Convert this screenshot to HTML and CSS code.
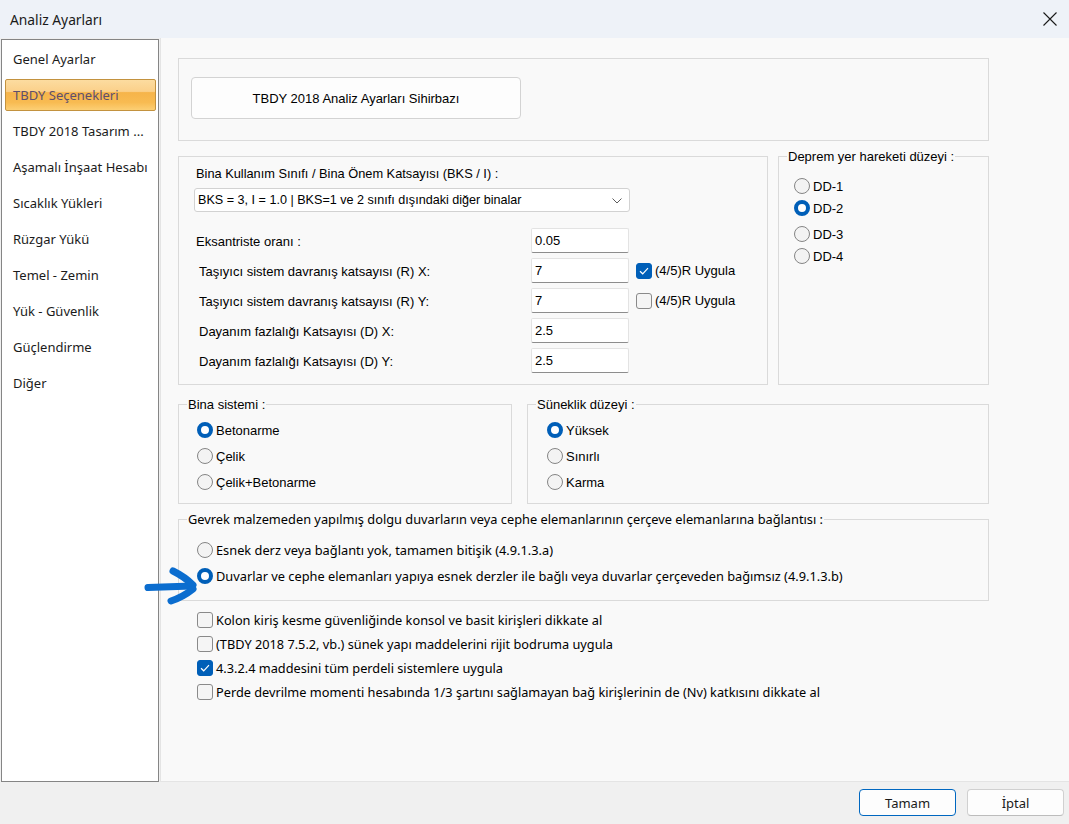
FILE: index.html
```html
<!DOCTYPE html>
<html lang="tr">
<head>
<meta charset="utf-8">
<title>Analiz Ayarları</title>
<link rel="stylesheet" href="styles.css">
</head>
<body>
<div class="window">
  <div class="titlebar">
    <span class="title">Analiz Ayarları</span>
    <button class="close" aria-label="Kapat">
      <svg width="14" height="14" viewBox="0 0 14 14"><path d="M0.5 0.5 L13.5 13.5 M13.5 0.5 L0.5 13.5" stroke="#1a1a1a" stroke-width="1.1" fill="none"/></svg>
    </button>
  </div>
  <div class="main">
    <ul class="nav">
      <li><span>Genel Ayarlar</span></li>
      <li class="sel"><span>TBDY Seçenekleri</span></li>
      <li><span>TBDY 2018 Tasarım ...</span></li>
      <li><span>Aşamalı İnşaat Hesabı</span></li>
      <li><span>Sıcaklık Yükleri</span></li>
      <li><span>Rüzgar Yükü</span></li>
      <li><span>Temel - Zemin</span></li>
      <li><span>Yük - Güvenlik</span></li>
      <li><span>Güçlendirme</span></li>
      <li><span>Diğer</span></li>
    </ul>
    <div class="content">
      <div class="box wizard-box">
        <button class="wizard">TBDY 2018 Analiz Ayarları Sihirbazı</button>
      </div>
      <div class="row1">
        <div class="box params">
          <div class="plabel">Bina Kullanım Sınıfı / Bina Önem Katsayısı (BKS / I) :</div>
          <div class="select">
            <span>BKS = 3, I = 1.0 | BKS=1 ve 2 sınıfı dışındaki diğer binalar</span>
            <svg width="10" height="6" viewBox="0 0 10 6"><path d="M0.5 0.5 L5 5 L9.5 0.5" stroke="#5c5c5c" stroke-width="1" fill="none"/></svg>
          </div>
          <div class="grid">
            <span class="glabel first">Eksantriste oranı :</span>
            <span class="input">0.05</span>
            <span></span>
            <span class="glabel">Taşıyıcı sistem davranış katsayısı (R) X:</span>
            <span class="input">7</span>
            <span class="check-inline"><span class="cb on"><svg width="10" height="8" viewBox="0 0 10 8"><path d="M1 4.2 L3.7 6.8 L9 1.2" stroke="#fff" stroke-width="1.2" fill="none"/></svg></span>(4/5)R Uygula</span>
            <span class="glabel">Taşıyıcı sistem davranış katsayısı (R) Y:</span>
            <span class="input">7</span>
            <span class="check-inline"><span class="cb"></span>(4/5)R Uygula</span>
            <span class="glabel">Dayanım fazlalığı Katsayısı (D) X:</span>
            <span class="input">2.5</span>
            <span></span>
            <span class="glabel">Dayanım fazlalığı Katsayısı (D) Y:</span>
            <span class="input">2.5</span>
            <span></span>
          </div>
        </div>
        <fieldset class="grp dd">
          <legend>Deprem yer hareketi düzeyi :</legend>
          <div class="opt"><span class="rb"></span>DD-1</div>
          <div class="opt"><span class="rb on"></span>DD-2</div>
          <div class="opt gap"><span class="rb"></span>DD-3</div>
          <div class="opt"><span class="rb"></span>DD-4</div>
        </fieldset>
      </div>
      <div class="row2">
        <fieldset class="grp sys">
          <legend>Bina sistemi :</legend>
          <div class="opt"><span class="rb on"></span>Betonarme</div>
          <div class="opt"><span class="rb"></span>Çelik</div>
          <div class="opt"><span class="rb"></span>Çelik+Betonarme</div>
        </fieldset>
        <fieldset class="grp sun">
          <legend>Süneklik düzeyi :</legend>
          <div class="opt"><span class="rb on"></span>Yüksek</div>
          <div class="opt"><span class="rb"></span>Sınırlı</div>
          <div class="opt"><span class="rb"></span>Karma</div>
        </fieldset>
      </div>
      <fieldset class="grp gev seg">
        <legend>Gevrek malzemeden yapılmış dolgu duvarların veya cephe elemanlarının çerçeve elemanlarına bağlantısı :</legend>
        <div class="opt"><span class="rb"></span>Esnek derz veya bağlantı yok, tamamen bitişik (4.9.1.3.a)</div>
        <div class="opt"><span class="rb on"></span>Duvarlar ve cephe elemanları yapıya esnek derzler ile bağlı veya duvarlar çerçeveden bağımsız (4.9.1.3.b)</div>
      </fieldset>
      <div class="checks seg">
        <div class="chk"><span class="cb"></span>Kolon kiriş kesme güvenliğinde konsol ve basit kirişleri dikkate al</div>
        <div class="chk"><span class="cb"></span>(TBDY 2018 7.5.2, vb.) sünek yapı maddelerini rijit bodruma uygula</div>
        <div class="chk"><span class="cb on"><svg width="10" height="8" viewBox="0 0 10 8"><path d="M1 4.2 L3.7 6.8 L9 1.2" stroke="#fff" stroke-width="1.2" fill="none"/></svg></span>4.3.2.4 maddesini tüm perdeli sistemlere uygula</div>
        <div class="chk"><span class="cb"></span>Perde devrilme momenti hesabında 1/3 şartını sağlamayan bağ kirişlerinin de (Nv) katkısını dikkate al</div>
      </div>
    </div>
  </div>
  <div class="footer">
    <button class="btn default">Tamam</button>
    <button class="btn">İptal</button>
  </div>
  <svg class="arrow" width="64" height="46" viewBox="0 0 64 46">
    <g stroke="#0b6dcf" stroke-width="7" stroke-linecap="round" stroke-linejoin="round" fill="none">
      <path d="M8 23.5 Q30 22.5 52 22"/>
      <path d="M33 7 Q45 13 53 21"/>
      <path d="M53 25 Q43 33 31 37"/>
    </g>
  </svg>
</div>
</body>
</html>
```

FILE: styles.css
```css
* { box-sizing: border-box; }

body {
  margin: 0;
  width: 1069px;
  height: 824px;
  overflow: hidden;
  background: #f0f0f0;
  font-family: "Liberation Sans", Arial, sans-serif;
  font-size: 13px;
  color: #000;
}

.seg { font-family: "Noto Sans", "Open Sans", sans-serif; }

.window {
  position: relative;
  display: flex;
  flex-direction: column;
  height: 824px;
}

.titlebar {
  height: 38px;
  flex: none;
  background: #eef2f8;
  display: flex;
  align-items: center;
  justify-content: space-between;
  padding-left: 10px;
}

.title {
  font-family: "Noto Sans", sans-serif;
  font-size: 13.8px;
  color: #1a1a1a;
}

.close {
  width: 38px;
  height: 38px;
  border: 0;
  padding: 0;
  background: transparent;
  display: flex;
  align-items: center;
  justify-content: center;
}

.main {
  flex: 1;
  display: flex;
  min-height: 0;
}

.nav {
  width: 158px;
  margin: 1px 0 0 1px;
  padding: 1px 0 0 0;
  list-style: none;
  background: #fff;
  border: 1px solid #858585;
  font-family: "Noto Sans", sans-serif;
  font-size: 13px;
  color: #1b1b1b;
}

.nav li {
  height: 36px;
  padding: 2px 2px 2px 3px;
}

.nav li span {
  display: flex;
  align-items: center;
  height: 100%;
  padding-left: 8px;
  white-space: nowrap;
}

.nav li.sel span {
  padding-left: 7px;
  border: 1px solid #c3923f;
  border-radius: 2px;
  color: #5e4f6e;
  background: linear-gradient(#fcdca0 0%, #fbd08a 38%, #f6b44a 42%, #f8bb52 75%, #fccf74 100%);
}

.content {
  flex: 1;
  margin-left: 1px;
  background: #f9f9f9;
  border-left: 1px solid #e4e4e4;
  border-bottom: 1px solid #e4e4e4;
  padding: 20px 0 0 17px;
}

.box { border: 1px solid #dadada; }

.wizard-box {
  width: 811px;
  height: 83px;
  padding: 18px 0 0 12px;
}

.wizard {
  width: 330px;
  height: 42px;
  background: #fdfdfd;
  border: 1px solid #d3d3d3;
  border-radius: 4px;
  font-family: "Liberation Sans", Arial, sans-serif;
  font-size: 13px;
  color: #000;
}

.row1 {
  display: flex;
  align-items: flex-start;
  gap: 10px;
  margin-top: 15px;
}

.params {
  width: 590px;
  height: 229px;
  padding: 9px 0 0 17px;
}

.plabel { line-height: 15px; font-size: 12.8px; }

.select {
  width: 436px;
  height: 24px;
  margin: 7px 0 0 -2px;
  background: #fff;
  border: 1px solid #d2d2d2;
  border-radius: 3px;
  display: flex;
  align-items: center;
  justify-content: space-between;
  padding: 0 7px 0 3px;
  font-size: 12.6px;
}

.select svg { margin-top: 1px; }

.grid {
  display: grid;
  grid-template-columns: 328px 98px auto;
  grid-auto-rows: 25px;
  row-gap: 5px;
  column-gap: 7px;
  margin-top: 16px;
  align-items: center;
}

.glabel { padding-left: 3px; padding-top: 2px; }
.glabel.first { padding-left: 0; }

.input {
  height: 25px;
  background: #fff;
  border: 1px solid #e3e3e3;
  border-bottom-color: #8d8d8d;
  border-radius: 2px;
  padding: 3px 0 0 3px;
  line-height: 17px;
}

.check-inline {
  display: flex;
  align-items: center;
  gap: 3px;
}

.cb {
  width: 16px;
  height: 16px;
  flex: none;
  border: 1px solid #8a8a8a;
  border-radius: 3px;
  background: #f5f5f5;
  display: flex;
  align-items: center;
  justify-content: center;
}

.cb.on {
  background: #005fb8;
  border-color: #005fb8;
}

fieldset.grp {
  margin: 0;
  padding: 0;
  min-width: 0;
  border: 1px solid #dadada;
}

fieldset.grp legend {
  padding: 0 1px;
  line-height: 15px;
}

.dd {
  width: 211px;
  height: 236px;
  margin-top: -7px !important;
  padding: 0 0 0 15px !important;
}
.dd legend { margin-left: -7px; }

.opt {
  display: flex;
  align-items: center;
  gap: 3px;
  height: 22px;
}

.rb {
  width: 16px;
  height: 16px;
  flex: none;
  border: 1px solid #858585;
  border-radius: 50%;
  background: #f3f3f3;
}

.rb.on {
  border: 4.5px solid #005fb8;
  background: #fff;
}

.dd .opt:first-of-type { margin-top: 11px; }
.dd .opt.gap { margin-top: 4px; }

.row2 {
  display: flex;
  gap: 15px;
  margin-top: 12px;
}

.sys, .sun { height: 107px; }
.sys { width: 334px; padding: 0 0 0 18px !important; }
.sys legend { margin-left: -10px; }
.sun { width: 462px; padding: 0 0 0 19px !important; }
.sun legend { margin-left: -11px; }

.sys .opt, .sun .opt, .gev .opt { height: 26px; }
.sys .opt:first-of-type, .sun .opt:first-of-type { margin-top: 5px; }

.gev {
  width: 811px;
  height: 89px;
  margin-top: 8px !important;
  padding: 0 0 0 18px !important;
  font-size: 12.8px;
}
.gev legend { margin-left: -10px; }

.gev .opt:first-of-type { margin-top: 10px; }

.checks {
  margin-top: 7px;
  padding-left: 19px;
  font-size: 12.75px;
}

.chk {
  display: flex;
  align-items: center;
  gap: 3px;
  height: 24px;
}

.footer {
  height: 42px;
  flex: none;
  display: flex;
  justify-content: flex-end;
  gap: 11px;
  padding: 7px 5px 0 0;
}

.btn {
  width: 97px;
  height: 27px;
  background: #fdfdfd;
  border: 1px solid #d0d0d0;
  border-bottom-color: #bcbcbc;
  border-radius: 4px;
  font-family: "Noto Sans", sans-serif;
  font-size: 13px;
  color: #1a1a1a;
  padding: 0;
}

.btn.default {
  border-color: #0067c0;
}

.arrow {
  position: absolute;
  left: 140px;
  top: 564px;
}
```
